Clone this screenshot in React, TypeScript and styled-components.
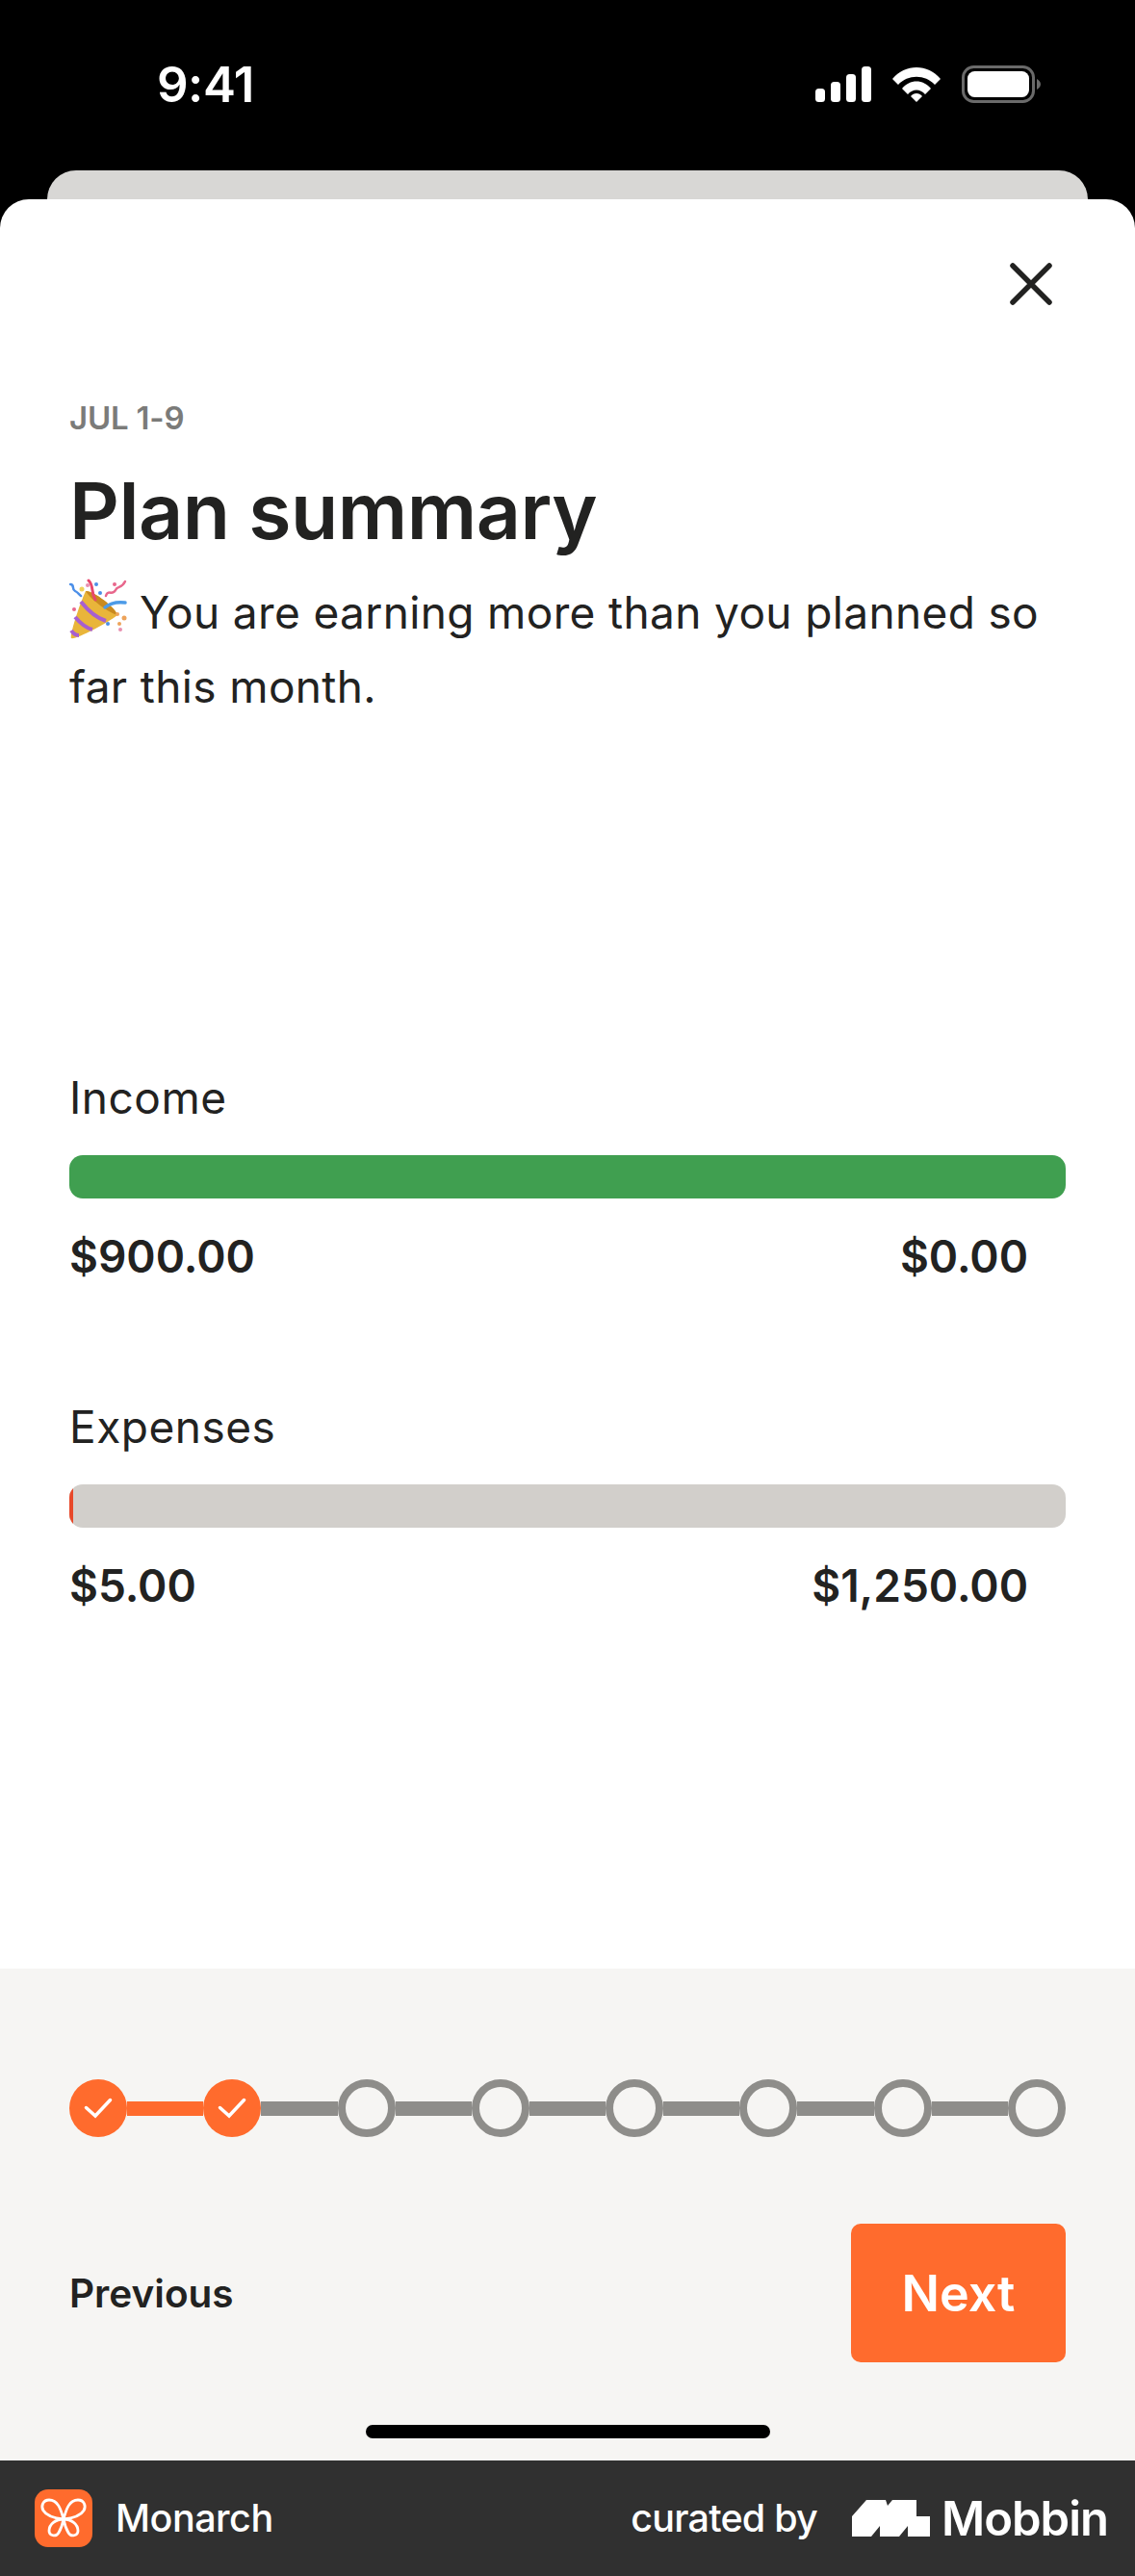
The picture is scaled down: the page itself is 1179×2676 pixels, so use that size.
import styled, { createGlobalStyle } from 'styled-components'

const GlobalStyle = createGlobalStyle`
  html, body {
    margin: 0;
    padding: 0;
    background: #000;
  }
  * {
    box-sizing: border-box;
  }
`

const Screen = styled.div`
  width: 1179px;
  height: 2676px;
  display: flex;
  flex-direction: column;
  background: #000;
  font-family: Inter, 'Liberation Sans', sans-serif;
  color: #222221;
  overflow: hidden;
`

const StatusBar = styled.div`
  height: 177px;
  flex: none;
  display: flex;
  align-items: flex-start;
  justify-content: space-between;
  padding: 60px 98px 0 163px;
  color: #fff;
`

const Clock = styled.span`
  font-size: 51px;
  line-height: 56px;
  font-weight: 600;
  letter-spacing: -0.5px;
`

const StatusIcons = styled.div`
  display: flex;
  align-items: center;
  gap: 22px;
  padding-top: 8px;
`

const BackCard = styled.div`
  height: 30px;
  flex: none;
  margin: 0 49px;
  background: #d8d7d5;
  border-radius: 30px 30px 0 0;
`

const Sheet = styled.div`
  flex: 1;
  display: flex;
  flex-direction: column;
  background: #fff;
  border-radius: 30px 30px 0 0;
  padding: 66px 72px 0;
`

const CloseRow = styled.div`
  display: flex;
  justify-content: flex-end;
  padding-right: 14px;
  height: 44px;
`

const DateLabel = styled.div`
  margin-top: 97px;
  font-size: 33px;
  line-height: 40px;
  font-weight: 600;
  color: #7b7b79;
  letter-spacing: -0.2px;
`

const Title = styled.h1`
  margin: 29px 0 0;
  font-size: 80.500px;
  line-height: 96px;
  font-weight: 600;
  letter-spacing: -0.5px;
`

const Message = styled.p`
  margin: 19px 0 0;
  font-size: 46px;
  line-height: 77px;
  font-weight: 400;
  letter-spacing: 0.36px;
`

const Popper = styled.svg`
  width: 62px;
  height: 64px;
  vertical-align: -12px;
  margin-right: 11px;
`

const Metric = styled.section<{ $gap: number }>`
  margin-top: ${props => props.$gap}px;
`

const MetricLabel = styled.div`
  font-size: 46px;
  line-height: 52px;
  letter-spacing: 0.5px;
`

const Track = styled.div<{ $tone: string }>`
  height: 45px;
  margin-top: 34px;
  border-radius: 14px;
  background: ${props => props.$tone};
  overflow: hidden;
`

const TrackFill = styled.div`
  height: 100%;
  background: #e8492a;
`

const AmountRow = styled.div`
  display: flex;
  justify-content: space-between;
  margin-top: 34px;
  padding-right: 39px;
  font-size: 46px;
  line-height: 52px;
  font-weight: 600;
`

const Footer = styled.div`
  height: 511px;
  flex: none;
  display: flex;
  flex-direction: column;
  background: #f6f5f3;
  padding: 115px 72px 0;
`

const Stepper = styled.div`
  display: flex;
  align-items: center;
`

const Step = styled.div<{ $done: boolean }>`
  width: 60px;
  height: 60px;
  flex: none;
  display: flex;
  align-items: center;
  justify-content: center;
  border-radius: 50%;
  border: ${props => (props.$done ? 'none' : '8px solid #8e8d8a')};
  background: ${props => (props.$done ? '#ff6b2d' : 'transparent')};
`

const Connector = styled.div<{ $done: boolean }>`
  flex: 1;
  height: 15px;
  background: ${props => (props.$done ? '#ff6b2d' : '#8e8d8a')};
`

const NavRow = styled.div`
  display: flex;
  align-items: center;
  justify-content: space-between;
  margin-top: 90px;
`

const PreviousLink = styled.span`
  font-size: 40.500px;
  font-weight: 600;
`

const NextButton = styled.div`
  width: 223px;
  height: 144px;
  display: flex;
  align-items: center;
  justify-content: center;
  border-radius: 10px;
  background: #ff6b2d;
  color: #fff;
  font-size: 52px;
  font-weight: 600;
`

const HomeIndicator = styled.div`
  width: 420px;
  height: 14px;
  margin: 65px auto 0;
  border-radius: 7px;
  background: #000;
`

const BrandBar = styled.div`
  height: 120px;
  flex: none;
  display: flex;
  align-items: center;
  justify-content: space-between;
  padding: 0 28px 0 36px;
  background: #303030;
  color: #fff;
`

const BrandGroup = styled.div`
  display: flex;
  align-items: center;
`

const AppIcon = styled.svg`
  width: 60px;
  height: 60px;
  margin-right: 24px;
`

const AppName = styled.span`
  font-size: 39.500px;
  font-weight: 500;
  letter-spacing: -0.5px;
`

const CuratedBy = styled.span`
  font-size: 39.500px;
  font-weight: 500;
  letter-spacing: -0.8px;
  margin-right: 36px;
`

const MobbinMark = styled.svg`
  width: 81px;
  height: 38px;
  margin-right: 12px;
`

const MobbinName = styled.span`
  font-size: 49px;
  font-weight: 600;
  letter-spacing: -1px;
`

const TOTAL_STEPS = 8
const DONE_STEPS = 2

const metrics = [
  {
    label: 'Income',
    tone: '#409f50',
    actual: '$900.00',
    planned: '$0.00',
    fill: 0,
    gap: 362,
  },
  {
    label: 'Expenses',
    tone: '#d2cfcb',
    actual: '$5.00',
    planned: '$1,250.00',
    fill: 0.4,
    gap: 125,
  },
]

const SignalIcon = () => (
  <svg width="58" height="37" viewBox="0 0 58 37" fill="#fff">
    <rect x="0" y="23" width="10" height="14" rx="3.5" />
    <rect x="16" y="16" width="10" height="21" rx="3.5" />
    <rect x="32" y="8" width="10" height="29" rx="3.5" />
    <rect x="48" y="0" width="10" height="37" rx="3.5" />
  </svg>
)

const WifiIcon = () => (
  <svg width="50" height="37" viewBox="0 0 50 37" fill="#fff">
    <path d="M0 13C13-3 37-3 50 13L44 19C34 8 16 8 6 19Z" />
    <path d="M10 23C18 13 32 13 40 23L34 29C29 23 21 23 16 29Z" />
    <path d="M19 31C22 27 28 27 31 31L25 37Z" />
  </svg>
)

const BatteryIcon = () => (
  <svg width="82" height="39" viewBox="0 0 82 39">
    <rect x="1.5" y="1.5" width="73" height="36" rx="11" fill="none" stroke="#6a6a6a" strokeWidth="3" />
    <rect x="6" y="6" width="64" height="27" rx="7.5" fill="#fff" />
    <path d="M78 14C80 15 82 17 82 19.500C82 22 80 24 78 25Z" fill="#6a6a6a" />
  </svg>
)

const CloseIcon = () => (
  <svg width="44" height="44" viewBox="0 0 44 44" fill="none" stroke="#222221" strokeWidth="5.500" strokeLinecap="round">
    <path d="M3 3L41 41M41 3L3 41" />
  </svg>
)

const PartyPopper = () => (
  <Popper viewBox="0 0 62 64" fill="none">
    <path d="M2 62C0 60 10 28 17 13C24 12 48 30 50 38C40 46 6 64 2 62Z" fill="#e9b53a" />
    <path d="M17 13C24 12 48 30 50 38C42 36 22 22 17 13Z" fill="#c98a1f" />
    <path d="M12 24C20 34 28 41 38 44M6 40C11 46 16 51 24 53M2 54C4 57 6 59 10 59" stroke="#a75fd0" strokeWidth="4" />
    <path d="M37 30C43 25 50 24 58 25" stroke="#4c9be8" strokeWidth="3.500" strokeLinecap="round" />
    <path d="M20 2C26 8 22 14 27 22" stroke="#e8476c" strokeWidth="3" strokeLinecap="round" />
    <path d="M1 6C6 6 2 11 6 13C10 15 9 16 12 18" stroke="#4c8fe8" strokeWidth="2.500" strokeLinecap="round" />
    <path d="M38 18C40 11 45 18 48 12C50 7 54 11 58 3" stroke="#e8678c" strokeWidth="2.500" strokeLinecap="round" />
    <circle cx="13" cy="11" r="2.500" fill="#f0d25a" />
    <circle cx="19" cy="7" r="2" fill="#e88fb0" />
    <circle cx="28" cy="6" r="2" fill="#4c8fe8" />
    <circle cx="32" cy="15" r="2" fill="#4c8fe8" />
    <circle cx="47" cy="6" r="2" fill="#e8678c" />
    <circle cx="5" cy="32" r="2" fill="#e8678c" />
    <circle cx="40" cy="47" r="2" fill="#4c8fe8" />
    <circle cx="50" cy="37" r="2" fill="#eda35a" />
    <circle cx="57" cy="41" r="2.500" fill="#eda35a" />
    <circle cx="52" cy="47" r="2" fill="#eda35a" />
    <circle cx="53" cy="53" r="2" fill="#e88fb0" />
  </Popper>
)

const CheckIcon = () => (
  <svg width="30" height="22" viewBox="0 0 30 22" fill="none" stroke="#fff" strokeWidth="3.500" strokeLinecap="round">
    <path d="M2.500 10.500L12 19L27.500 2.500" />
  </svg>
)

const MonarchIcon = () => (
  <AppIcon viewBox="0 0 60 60">
    <rect width="60" height="60" rx="14" fill="#ff6b2d" />
    <g fill="none" stroke="#fff" strokeWidth="2.800">
      <path d="M30 31C27 20 24 11 15 11C9 11 6 17 9 22C12 27 21 30 30 31C22 31 15 36 15 43C15 48 22 50 25 45C28 40 29 36 30 31Z" />
      <path d="M30 31C33 20 36 11 45 11C51 11 54 17 51 22C48 27 39 30 30 31C38 31 45 36 45 43C45 48 38 50 35 45C32 40 31 36 30 31Z" />
    </g>
  </AppIcon>
)

const MobbinLogo = () => (
  <MobbinMark viewBox="0 0 81 38" fill="#fff">
    <path d="M0 38V17L15 0H35L37 6L42 0H67V17H81V38H58V27L49 38H29V27L20 38Z" />
  </MobbinMark>
)

function StepNode({ index }: { index: number }) {
  const done = index < DONE_STEPS
  return (
    <>
      {index > 0 && <Connector $done={done} />}
      <Step $done={done}>{done && <CheckIcon />}</Step>
    </>
  )
}

const App = () => (
  <Screen>
    <GlobalStyle />
    <StatusBar>
      <Clock>9:41</Clock>
      <StatusIcons>
        <SignalIcon />
        <WifiIcon />
        <BatteryIcon />
      </StatusIcons>
    </StatusBar>
    <BackCard />
    <Sheet>
      <CloseRow>
        <CloseIcon />
      </CloseRow>
      <DateLabel>JUL 1-9</DateLabel>
      <Title>Plan summary</Title>
      <Message>
        <PartyPopper />
        You are earning more than you planned so far this month.
      </Message>
      {metrics.map(metric => (
        <Metric key={metric.label} $gap={metric.gap}>
          <MetricLabel>{metric.label}</MetricLabel>
          <Track $tone={metric.tone}>
            {metric.fill > 0 && <TrackFill style={{ width: `${metric.fill}%` }} />}
          </Track>
          <AmountRow>
            <span>{metric.actual}</span>
            <span>{metric.planned}</span>
          </AmountRow>
        </Metric>
      ))}
    </Sheet>
    <Footer>
      <Stepper>
        {Array.from({ length: TOTAL_STEPS }, (_, i) => (
          <StepNode key={i} index={i} />
        ))}
      </Stepper>
      <NavRow>
        <PreviousLink>Previous</PreviousLink>
        <NextButton>Next</NextButton>
      </NavRow>
      <HomeIndicator />
    </Footer>
    <BrandBar>
      <BrandGroup>
        <MonarchIcon />
        <AppName>Monarch</AppName>
      </BrandGroup>
      <BrandGroup>
        <CuratedBy>curated by</CuratedBy>
        <MobbinLogo />
        <MobbinName>Mobbin</MobbinName>
      </BrandGroup>
    </BrandBar>
  </Screen>
)

export default App
